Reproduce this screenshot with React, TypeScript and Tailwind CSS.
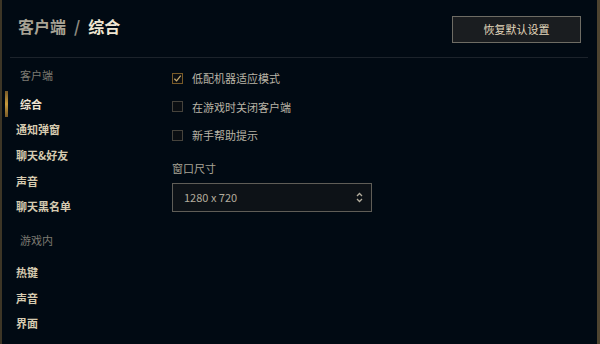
import { ReactNode } from "react";

const font = { fontFamily: '"Noto Sans CJK SC", "Noto Sans", sans-serif' };

function NavItem({ label, active }: { label: string; active?: boolean }) {
  return (
    <div className="relative flex h-[25.7px] items-center">
      {active && <div className="absolute left-[3px] top-0 h-[26px] w-[3px] bg-gradient-to-b from-[#785a28] via-[#c89b3c] to-[#785a28]" />}
      <span
        className={
          active
            ? "pl-[18px] text-[11px] font-bold text-[#f0e6d2]"
            : "pl-[14px] text-[11px] font-bold text-[#d6cbb0]"
        }
      >
        {label}
      </span>
    </div>
  );
}

function SectionLabel({ children }: { children: ReactNode }) {
  return <div className="flex h-[20px] items-center pl-[18px] text-[11px] text-[#7d7a72]">{children}</div>;
}

function CheckRow({ label, checked }: { label: string; checked?: boolean }) {
  return (
    <div className="flex h-[28.5px] items-center">
      <div
        className={
          checked
            ? "flex h-[11px] w-[11px] items-center justify-center border border-[#785a28] bg-[#0a0e12]"
            : "h-[11px] w-[11px] border border-[#46433c] bg-[#0a0e12]"
        }
      >
        {checked && (
          <svg width="9" height="9" viewBox="0 0 10 10" fill="none">
            <path d="M1.5 5.2 L4 7.6 L8.6 1.8" stroke="#c8aa6e" strokeWidth="1.4" />
          </svg>
        )}
      </div>
      <span className="ml-[9px] text-[11px] text-[#b9b4a6]">{label}</span>
    </div>
  );
}

export default function App() {
  return (
    <div
      className="flex h-[344px] w-[600px] flex-col overflow-hidden border-l-2 border-r-[3px] border-l-[#3d3626] border-r-[#4e4430] bg-[#010a13]"
      style={font}
    >
      <div className="mx-[8px] mr-[9px] flex h-[58px] shrink-0 items-start justify-between border-b border-[#1c232b]">
        <div className="mt-[14px] pl-[8px] text-[16px] font-bold leading-[24px]">
          <span className="text-[#a8a395]">客户端</span>
          <span className="mx-[8px] text-[#8e8a80]">/</span>
          <span className="text-[#f0e6d2]">综合</span>
        </div>
        <button
          type="button"
          className="mr-[7px] mt-[16px] flex h-[27px] w-[129px] items-center justify-center border border-[#6e6c64] bg-[#1a1d20] text-[11px] text-[#e3d8bd]"
        >
          恢复默认设置
        </button>
      </div>

      <div className="flex flex-1">
        <div className="flex w-[158px] flex-col pt-[7px]">
          <SectionLabel>客户端</SectionLabel>
          <div className="mt-[6px]">
            <NavItem label="综合" active />
            <NavItem label="通知弹窗" />
            <NavItem label="聊天&好友" />
            <NavItem label="声音" />
            <NavItem label="聊天黑名单" />
          </div>
          <div className="mt-[11px]">
            <SectionLabel>游戏内</SectionLabel>
          </div>
          <div className="mt-[9px]">
            <NavItem label="热键" />
            <NavItem label="声音" />
            <NavItem label="界面" />
          </div>
        </div>

        <div className="flex flex-col pl-[12px] pt-[6px]">
          <CheckRow label="低配机器适应模式" checked />
          <CheckRow label="在游戏时关闭客户端" />
          <CheckRow label="新手帮助提示" />
          <div className="mt-[10px] text-[11px] text-[#a8a395]">窗口尺寸</div>
          <div className="mt-[7px] flex h-[29px] w-[200px] items-center justify-between border border-[#5f5d57] bg-[#0d1217] pl-[11px] pr-[8px]">
            <span className="text-[11px] text-[#b3ad9d]">1280 x 720</span>
            <svg width="7" height="11" viewBox="0 0 7 11" fill="none">
              <path d="M1 4 L3.5 1.5 L6 4" stroke="#b3ad9d" strokeWidth="1.3" />
              <path d="M1 7 L3.5 9.5 L6 7" stroke="#b3ad9d" strokeWidth="1.3" />
            </svg>
          </div>
        </div>
      </div>
    </div>
  );
}
